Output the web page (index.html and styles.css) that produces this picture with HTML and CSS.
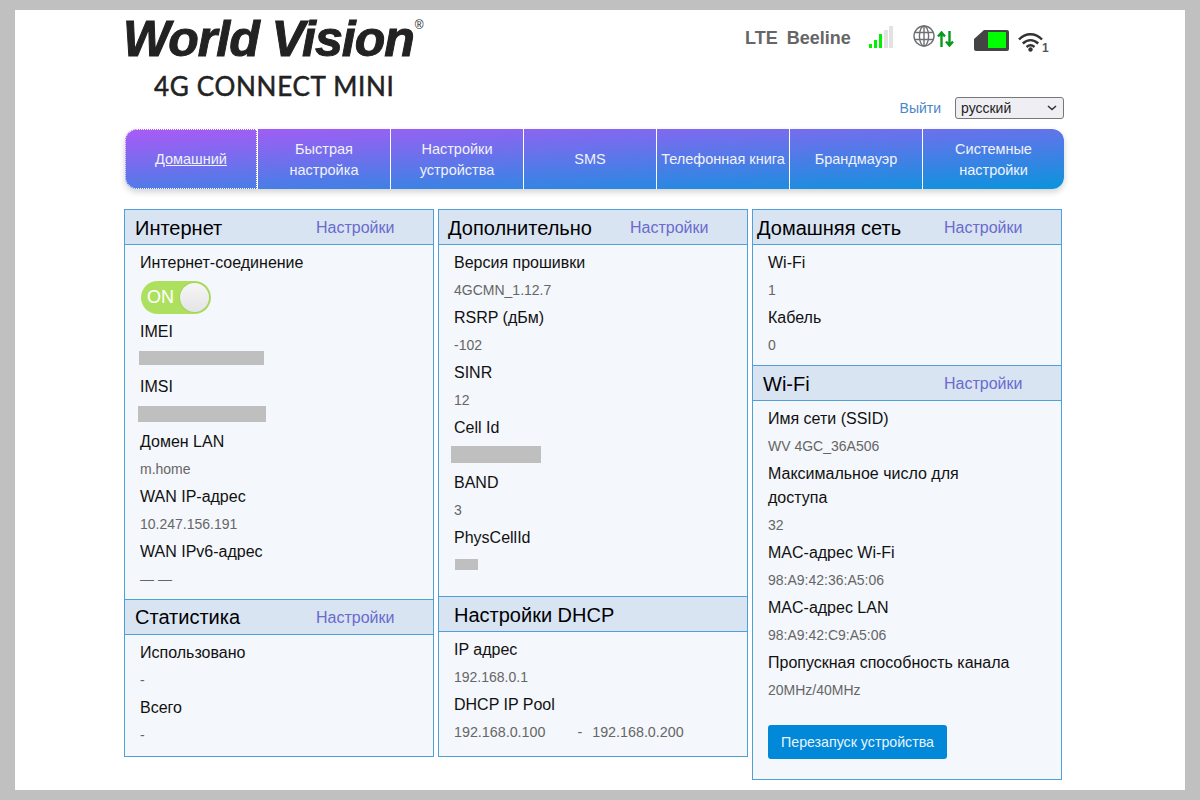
FILE: index.html
```html
<!DOCTYPE html>
<html lang="ru">
<head>
    <meta charset="UTF-8">
    <title>World Vision 4G Connect Mini</title>
    <link rel="stylesheet" href="styles.css">
</head>
<body>
    <div class="page">
        <div class="wrap">
            <div class="top">
                <div class="logo">
                    <div class="logo-brand">World Vision<span class="logo-reg">®</span></div>
                    <div class="logo-model">4G CONNECT MINI</div>
                </div>
                <div class="top-right">
                    <div class="status">
                        <span class="status-text status-lte">LTE</span>
                        <span class="status-text status-op">Beeline</span>
                        <svg class="icon-signal" width="24" height="22" viewBox="0 0 24 22">
                            <rect x="0" y="18" width="3" height="4" fill="#00f000"/>
                            <rect x="5" y="14" width="3" height="8" fill="#00f000"/>
                            <rect x="10" y="8" width="3" height="14" fill="#00f000"/>
                            <rect x="15" y="4" width="4" height="18" fill="#e2e2e2"/>
                            <rect x="20" y="0" width="4" height="22" fill="#e2e2e2"/>
                        </svg>
                        <svg class="icon-globe" width="22" height="22" viewBox="0 0 22 22" fill="none" stroke="#6e7073" stroke-width="1.4">
                            <circle cx="11" cy="11" r="10"/>
                            <ellipse cx="11" cy="11" rx="4.600" ry="10"/>
                            <path d="M11 1v20M1.800 7.500h18.400M1.800 14.500h18.400"/>
                        </svg>
                        <svg class="icon-arrows" width="17" height="16" viewBox="0 0 17 16" fill="none" stroke="#089a1e" stroke-width="2.400">
                            <path d="M4.500 16V2M1 5.500l3.500-4 3.500 4"/>
                            <path d="M12.500 0v14M9 10.500l3.500 4 3.500-4"/>
                        </svg>
                        <svg class="icon-sim" width="35" height="21" viewBox="0 0 35 21">
                            <path d="M10 0h23a2 2 0 0 1 2 2v17a2 2 0 0 1-2 2H2a2 2 0 0 1-2-2V9z" fill="#444"/>
                            <rect x="14" y="2" width="18" height="16" fill="#00ff00"/>
                        </svg>
                        <svg class="icon-wifi" width="29" height="20" viewBox="0 0 29 20" fill="none" stroke="#333" stroke-width="2.400">
                            <path d="M1 7.500C7.500 0.500 17.500 0.500 24 7.500"/>
                            <path d="M4.800 11.500c4.800-4.400 10.600-4.400 15.400 0"/>
                            <path d="M8.500 15c2.600-2.200 5.400-2.200 8 0"/>
                            <circle cx="12.500" cy="17.500" r="2.200" fill="#333" stroke="none"/>
                            <text x="24" y="19.500" class="wifi-count">1</text>
                        </svg>
                    </div>
                    <div class="lang">
                        <a class="logout" href="#">Выйти</a>
                        <select class="lang-select">
                            <option>русский</option>
                        </select>
                    </div>
                </div>
            </div>

            <ul class="nav">
                <li class="active"><a href="#">Домашний</a></li>
                <li><a href="#">Быстрая настройка</a></li>
                <li><a href="#">Настройки устройства</a></li>
                <li><a href="#">SMS</a></li>
                <li><a href="#">Телефонная книга</a></li>
                <li><a href="#">Брандмауэр</a></li>
                <li><a href="#">Системные настройки</a></li>
            </ul>

            <div class="columns">
                <div class="column">
                    <div class="panel-head">
                        <h2>Интернет</h2>
                        <a href="#">Настройки</a>
                    </div>
                    <div class="panel-body">
                        <div class="label">Интернет-соединение</div>
                        <div class="toggle-row">
                            <div class="toggle"><span>ON</span><i></i></div>
                        </div>
                        <div class="label">IMEI</div>
                        <div class="value"><span class="mask mask-imei"></span></div>
                        <div class="label">IMSI</div>
                        <div class="value"><span class="mask mask-imsi"></span></div>
                        <div class="label">Домен LAN</div>
                        <div class="value">m.home</div>
                        <div class="label">WAN IP-адрес</div>
                        <div class="value">10.247.156.191</div>
                        <div class="label">WAN IPv6-адрес</div>
                        <div class="value">— —</div>
                    </div>
                    <div class="panel-head panel-head-next">
                        <h2>Статистика</h2>
                        <a href="#">Настройки</a>
                    </div>
                    <div class="panel-body body-stat">
                        <div class="label">Использовано</div>
                        <div class="value">-</div>
                        <div class="label">Всего</div>
                        <div class="value">-</div>
                    </div>
                </div>

                <div class="column">
                    <div class="panel-head head-narrow">
                        <h2>Дополнительно</h2>
                        <a href="#">Настройки</a>
                    </div>
                    <div class="panel-body body-tall">
                        <div class="label">Версия прошивки</div>
                        <div class="value">4GCMN_1.12.7</div>
                        <div class="label">RSRP (дБм)</div>
                        <div class="value">-102</div>
                        <div class="label">SINR</div>
                        <div class="value">12</div>
                        <div class="label">Cell Id</div>
                        <div class="value"><span class="mask mask-cell"></span></div>
                        <div class="label">BAND</div>
                        <div class="value">3</div>
                        <div class="label">PhysCellId</div>
                        <div class="value"><span class="mask mask-phys"></span></div>
                    </div>
                    <div class="panel-head panel-head-next head-wide">
                        <h2>Настройки DHCP</h2>
                    </div>
                    <div class="panel-body body-dhcp">
                        <div class="label">IP адрес</div>
                        <div class="value">192.168.0.1</div>
                        <div class="label">DHCP IP Pool</div>
                        <div class="value pool"><span>192.168.0.100</span><span class="pool-dash">-</span><span>192.168.0.200</span></div>
                    </div>
                </div>

                <div class="column">
                    <div class="panel-head head-home">
                        <h2>Домашняя сеть</h2>
                        <a href="#">Настройки</a>
                    </div>
                    <div class="panel-body">
                        <div class="label">Wi-Fi</div>
                        <div class="value">1</div>
                        <div class="label">Кабель</div>
                        <div class="value">0</div>
                    </div>
                    <div class="panel-head panel-head-next">
                        <h2>Wi-Fi</h2>
                        <a href="#">Настройки</a>
                    </div>
                    <div class="panel-body body-wifi">
                        <div class="label">Имя сети (SSID)</div>
                        <div class="value">WV 4GC_36A506</div>
                        <div class="label label-wrap">Максимальное число для доступа</div>
                        <div class="value">32</div>
                        <div class="label">MAC-адрес Wi-Fi</div>
                        <div class="value">98:A9:42:36:A5:06</div>
                        <div class="label">MAC-адрес LAN</div>
                        <div class="value">98:A9:42:C9:A5:06</div>
                        <div class="label">Пропускная способность канала</div>
                        <div class="value">20MHz/40MHz</div>
                        <button class="restart" type="button">Перезапуск устройства</button>
                    </div>
                </div>
            </div>
        </div>
    </div>
</body>
</html>
```

FILE: styles.css
```css
* {
    box-sizing: border-box;
}
html, body {
    margin: 0;
    height: 100%;
}
body {
    background: #c0c0c0;
    padding: 10px 15px;
    font-family: "Liberation Sans", Arial, sans-serif;
    overflow: hidden;
}
.page {
    background: #fff;
    height: 780px;
    padding-left: 109px;
}
.wrap {
    width: 940px;
}
.top {
    display: flex;
    justify-content: space-between;
    height: 119px;
}
.logo-brand {
    margin-left: -1px;
    font-size: 50px;
    line-height: 58px;
    font-weight: bold;
    font-style: italic;
    color: #222;
    letter-spacing: -1px;
    -webkit-text-stroke: 1px #222;
    white-space: nowrap;
}
.logo-reg {
    font-size: 12px;
    font-style: normal;
    font-weight: normal;
    letter-spacing: 0;
    -webkit-text-stroke: 0;
    vertical-align: 27px;
    line-height: 0;
    margin-left: 1px;
}
.logo-model {
    margin: 3px 0 0 30px;
    font-family: Lato, sans-serif;
    font-size: 26px;
    line-height: 30px;
    font-weight: normal;
    letter-spacing: 0.7px;
    color: #222;
    -webkit-text-stroke: 0.5px #222;
    white-space: nowrap;
}
.top-right {
    width: 319px;
    display: flex;
    flex-direction: column;
    align-items: flex-end;
}
.status {
    width: 319px;
    height: 87px;
    display: flex;
    align-items: flex-start;
    padding-top: 15px;
}
.status-text {
    font-size: 18px;
    line-height: 26px;
    font-weight: bold;
    color: #666;
}
.status-lte {
    margin-right: 9px;
}
.icon-signal {
    margin: 1px 0 0 18px;
}
.icon-globe {
    margin: 0 0 0 20px;
}
.icon-arrows {
    margin: 6px 0 0 2px;
}
.icon-sim {
    margin: 5px 0 0 20px;
}
.icon-wifi {
    margin: 7px 0 0 9px;
    overflow: visible;
}
.wifi-count {
    font-size: 12px;
    font-weight: bold;
    fill: #555;
    stroke: none;
}
.lang {
    display: flex;
    align-items: center;
}
.logout {
    color: #4a86c8;
    font-size: 14px;
    text-decoration: none;
    margin-right: 14px;
}
.lang-select {
    appearance: none;
    width: 109px;
    height: 22px;
    padding: 0 0 0 5px;
    font-family: "Liberation Sans", Arial, sans-serif;
    font-size: 14px;
    color: #222;
    background: #efeff3 url("data:image/svg+xml,%3Csvg xmlns='http://www.w3.org/2000/svg' width='10' height='6' viewBox='0 0 10 6'%3E%3Cpath d='M1 1l4 3.500L9 1' fill='none' stroke='%23333' stroke-width='1.600'/%3E%3C/svg%3E") no-repeat right 6px center;
    border: 1px solid #777;
    border-radius: 3px;
}
.nav {
    list-style: none;
    margin: 0 0 0 1px;
    padding: 0;
    height: 60px;
    width: 939px;
    display: flex;
    border-radius: 12px;
    background: linear-gradient(177deg, #aa5af6 0%, #0a94dc 100%);
    box-shadow: 0 3px 6px rgba(0, 0, 0, 0.18);
}
.nav li {
    width: 133px;
    border-left: 1px solid #fff;
    display: flex;
    align-items: center;
    justify-content: center;
    text-align: center;
    padding-top: 1px;
}
.nav li:last-child {
    flex: 1;
}
.nav a {
    color: #f2f2fb;
    font-size: 14.5px;
    line-height: 21px;
    text-decoration: none;
    padding: 0 16px;
}
.nav li:nth-child(5) a {
    padding: 0;
}
.nav li.active {
    width: 132px;
    border: 1px dotted #fff;
    border-radius: 12px 0 0 12px;
}
.nav li.active a {
    text-decoration: underline;
}
.columns {
    display: flex;
    align-items: flex-start;
    gap: 4px;
    margin-top: 20px;
}
.column {
    width: 310px;
    border: 1px solid #4f9fd8;
    background: #f4f7fb;
}
.panel-head {
    display: flex;
    align-items: center;
    height: 35px;
    padding: 2px 0 0 10px;
    background: #d9e4f3;
    border-bottom: 1px solid #4f9fd8;
}
.panel-head-next {
    border-top: 1px solid #4f9fd8;
    height: 36px;
}
.panel-head h2 {
    margin: 0;
    width: 181px;
    flex: none;
    font-size: 20px;
    font-weight: normal;
    color: #000;
    white-space: nowrap;
}
.panel-head a {
    color: #6a6bcc;
    font-size: 16px;
    text-decoration: none;
}
.head-narrow {
    padding-left: 9px;
}
.head-narrow h2 {
    width: 182px;
}
.head-wide {
    padding-left: 15px;
}
.head-home {
    padding-left: 4px;
}
.head-home h2 {
    width: 187px;
}
.panel-body {
    padding: 4px 15px 6px;
}
.body-tall {
    padding-bottom: 17px;
}
.body-stat {
    padding-bottom: 7px;
}
.body-dhcp {
    padding-bottom: 10px;
}
.body-wifi {
    padding-bottom: 20px;
}
.label {
    font-size: 16px;
    line-height: 27.5px;
    color: #111;
    white-space: nowrap;
}
.label-wrap {
    white-space: normal;
    line-height: 24px;
    width: 230px;
    padding-top: 2px;
    padding-bottom: 1px;
}
.value {
    display: flex;
    align-items: center;
    height: 27.5px;
    font-size: 14px;
    color: #666;
    white-space: nowrap;
}
.mask {
    display: block;
    background: #bfbfbf;
}
.mask-imei {
    width: 125px;
    height: 14px;
    margin: -1px 0 0 -1px;
}
.mask-imsi {
    width: 128px;
    height: 16px;
    margin-left: -2px;
}
.mask-cell {
    width: 90px;
    height: 17px;
    margin: -1px 0 0 -3px;
}
.mask-phys {
    width: 23px;
    height: 11px;
    margin: -1px 0 0 1px;
}
.pool {
    font-size: 14.3px;
}
.pool-dash {
    margin: 0 10px 0 32px;
}
.toggle-row {
    height: 41px;
    display: flex;
    align-items: center;
}
.toggle {
    position: relative;
    width: 70px;
    height: 33px;
    margin-left: 1px;
    border-radius: 17px;
    background: #aee060;
    color: #fff;
    font-size: 18px;
    line-height: 33px;
    padding-left: 6px;
}
.toggle i {
    position: absolute;
    top: 2px;
    right: 2px;
    width: 29px;
    height: 29px;
    border-radius: 50%;
    background: linear-gradient(#f6f6f6, #e4e4e6);
    box-shadow: 0 0 2px rgba(0, 0, 0, 0.2);
}
.restart {
    display: block;
    margin-top: 21px;
    width: 179px;
    height: 34px;
    border: 0;
    border-radius: 3px;
    background: #0288d8;
    color: #e8f4fc;
    font-family: "Liberation Sans", Arial, sans-serif;
    font-size: 14.2px;
}
```
